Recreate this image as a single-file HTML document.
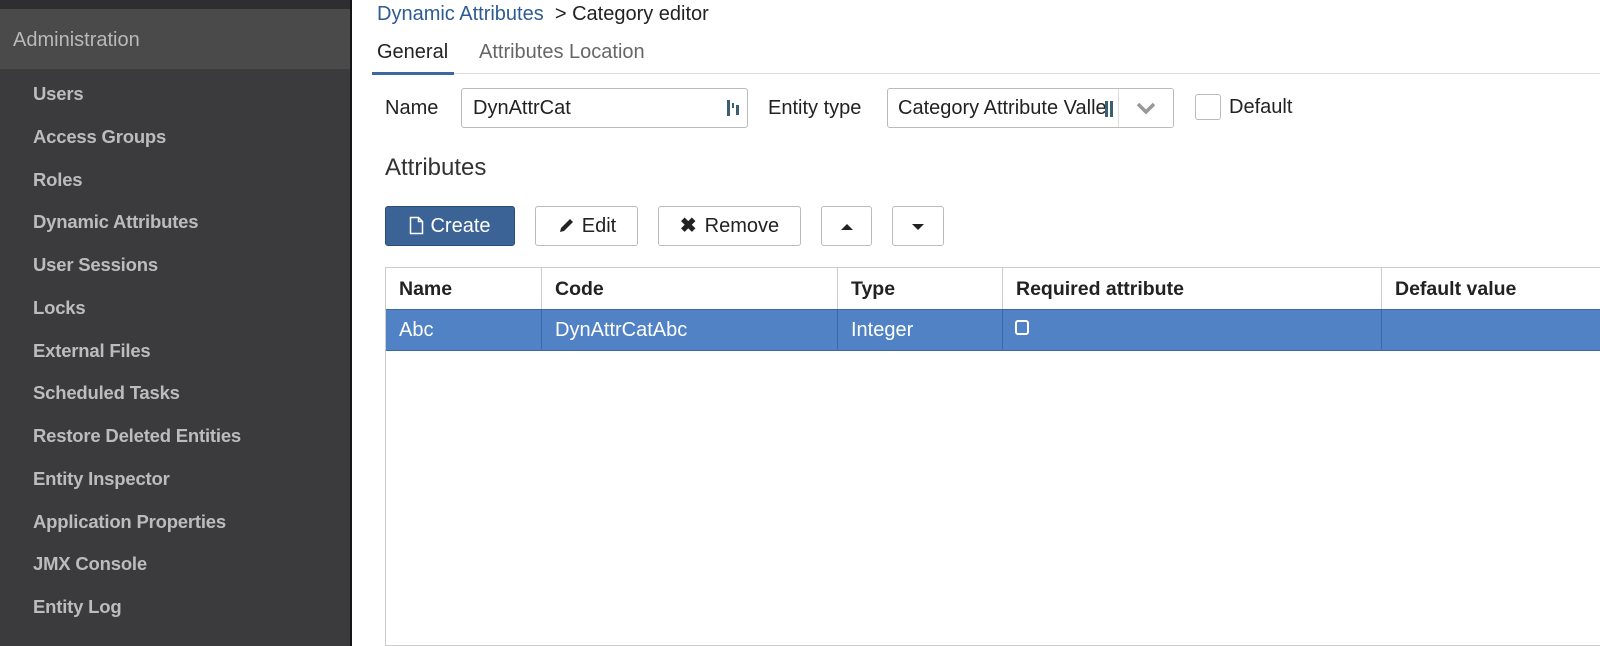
<!DOCTYPE html>
<html><head><style>
*{margin:0;padding:0;box-sizing:border-box}
body{width:1600px;height:646px;overflow:hidden;background:#fff;font-family:"Liberation Sans",sans-serif;position:relative;color:#333}
.sb{position:absolute;left:0;top:0;width:352px;height:646px;background:#3b3b3d;border-right:2px solid #151515}
.sb .top{height:9px;background:#2e2e30}
.sb .adm{position:absolute;top:9px;left:0;width:350px;height:60px;background:#4a4a4a;color:#b9b9b9;font-size:20px;line-height:62px;padding-left:13px}
.sb .it{position:absolute;left:33px;color:#bcbcbc;font-size:18.5px;font-weight:bold;letter-spacing:-0.2px}
.a{position:absolute;white-space:nowrap}
.btn{position:absolute;top:206px;height:40px;border:1px solid #bbb;border-radius:3px;background:#fff;font-size:20px;line-height:38px;text-align:center;color:#222}
.th{position:absolute;top:268px;height:41px;line-height:42px;font-size:19.5px;font-weight:bold;color:#222;padding-left:13px;border-right:1px solid #ccc}
.td{position:absolute;top:310px;height:40px;line-height:40px;font-size:20px;color:#fff;padding-left:13px;border-right:1px solid #3d68a6}
</style></head><body>
<div class="sb"><div class="top"></div><div class="adm">Administration</div>
<div class="it" style="top:83px">Users</div>
<div class="it" style="top:126px">Access Groups</div>
<div class="it" style="top:169px">Roles</div>
<div class="it" style="top:211px">Dynamic Attributes</div>
<div class="it" style="top:254px">User Sessions</div>
<div class="it" style="top:297px">Locks</div>
<div class="it" style="top:340px">External Files</div>
<div class="it" style="top:382px">Scheduled Tasks</div>
<div class="it" style="top:425px">Restore Deleted Entities</div>
<div class="it" style="top:468px">Entity Inspector</div>
<div class="it" style="top:511px">Application Properties</div>
<div class="it" style="top:553px">JMX Console</div>
<div class="it" style="top:596px">Entity Log</div>
</div>
<div class="a" style="left:377px;top:3px;font-size:20px;color:#2f5b93">Dynamic Attributes <span style="color:#222">&nbsp;&gt; Category editor</span></div>
<div class="a" style="left:377px;top:41px;font-size:20px;color:#222">General</div>
<div class="a" style="left:479px;top:41px;font-size:20px;color:#666">Attributes Location</div>
<div class="a" style="left:372px;top:73px;width:1228px;height:1px;background:#ddd"></div>
<div class="a" style="left:372px;top:72px;width:82px;height:3px;background:#3b67a3"></div>
<div class="a" style="left:385px;top:97px;font-size:20px;color:#222">Name</div>
<div class="a" style="left:461px;top:88px;width:287px;height:40px;border:1px solid #bbb;border-radius:3px;font-size:20px;line-height:38px;padding-left:11px;color:#222">DynAttrCat
<svg style="position:absolute;right:7px;top:10px" width="14" height="18"><rect x="1" y="1" width="3" height="16" fill="#3a5f70"/><rect x="6" y="4" width="2" height="5" fill="#3a5f70"/><rect x="10" y="6" width="3" height="10" fill="#3a5f70"/></svg></div>
<div class="a" style="left:768px;top:97px;font-size:20px;color:#222">Entity type</div>
<div class="a" style="left:887px;top:88px;width:287px;height:40px;border:1px solid #bbb;border-radius:3px;font-size:20px;line-height:38px;padding-left:10px;color:#222;overflow:hidden">Category Attribute Valle
<div style="position:absolute;left:230px;top:0;width:56px;height:38px;background:#fff;border-left:1px solid #ddd"><svg style="position:absolute;left:17px;top:12px" width="20" height="14"><path d="M2 3 L10 11 L18 3" stroke="#999" stroke-width="3.5" fill="none"/></svg></div>
<svg style="position:absolute;left:216px;top:10px" width="12" height="20"><rect x="1" y="2" width="3" height="16" fill="#3a5f70"/><rect x="6" y="2" width="3" height="16" fill="#3a5f70"/></svg></div>
<div class="a" style="left:1195px;top:94px;width:26px;height:26px;border:1px solid #bbb;border-radius:3px"></div>
<div class="a" style="left:1229px;top:96px;font-size:20px;color:#222">Default</div>
<div class="a" style="left:385px;top:154px;font-size:24px;color:#333">Attributes</div>
<div class="btn" style="left:385px;width:130px;background:#3c6396;border-color:#2c4d7a;color:#fff"><svg style="vertical-align:-3px;margin-right:6px" width="15" height="19"><path d="M1.5 1.5 H9.5 L13.5 5.5 V17.5 H1.5 Z M9.5 1.5 V5.5 H13.5" stroke="#fff" stroke-width="1.5" fill="none"/></svg>Create</div>
<div class="btn" style="left:535px;width:103px"><svg style="vertical-align:-3px;margin-right:7px" width="18" height="18"><path d="M3 15 L4 11 L13 2 L16 5 L7 14 Z" fill="#222"/></svg>Edit</div>
<div class="btn" style="left:658px;width:143px"><span style="font-weight:bold;margin-right:8px">✖</span>Remove</div>
<div class="btn" style="left:821px;width:51px"><svg width="14" height="10" style="vertical-align:0"><path d="M1 8 L7 2 L13 8Z" fill="#222"/></svg></div>
<div class="btn" style="left:892px;width:52px"><svg width="14" height="10" style="vertical-align:0"><path d="M1 2 L7 8 L13 2Z" fill="#222"/></svg></div>
<div class="a" style="left:385px;top:267px;width:1215px;height:379px;border:1px solid #ccc;border-right:none"></div>
<div class="th" style="left:386px;width:156px">Name</div>
<div class="th" style="left:542px;width:296px">Code</div>
<div class="th" style="left:838px;width:165px">Type</div>
<div class="th" style="left:1003px;width:379px">Required attribute</div>
<div class="th" style="left:1382px;width:218px;border:none">Default value</div>
<div class="a" style="left:386px;top:309px;width:1214px;height:42px;background:#5082c5;border-top:1px solid #3d68a6;border-bottom:1px solid #3d68a6"></div>
<div class="td" style="left:386px;width:156px">Abc</div>
<div class="td" style="left:542px;width:296px">DynAttrCatAbc</div>
<div class="td" style="left:838px;width:165px">Integer</div>
<div class="td" style="left:1003px;width:379px"><div style="position:absolute;left:12px;top:10px;width:14px;height:15px;border:2px solid #fff;border-radius:3px"></div></div>
</body></html>
